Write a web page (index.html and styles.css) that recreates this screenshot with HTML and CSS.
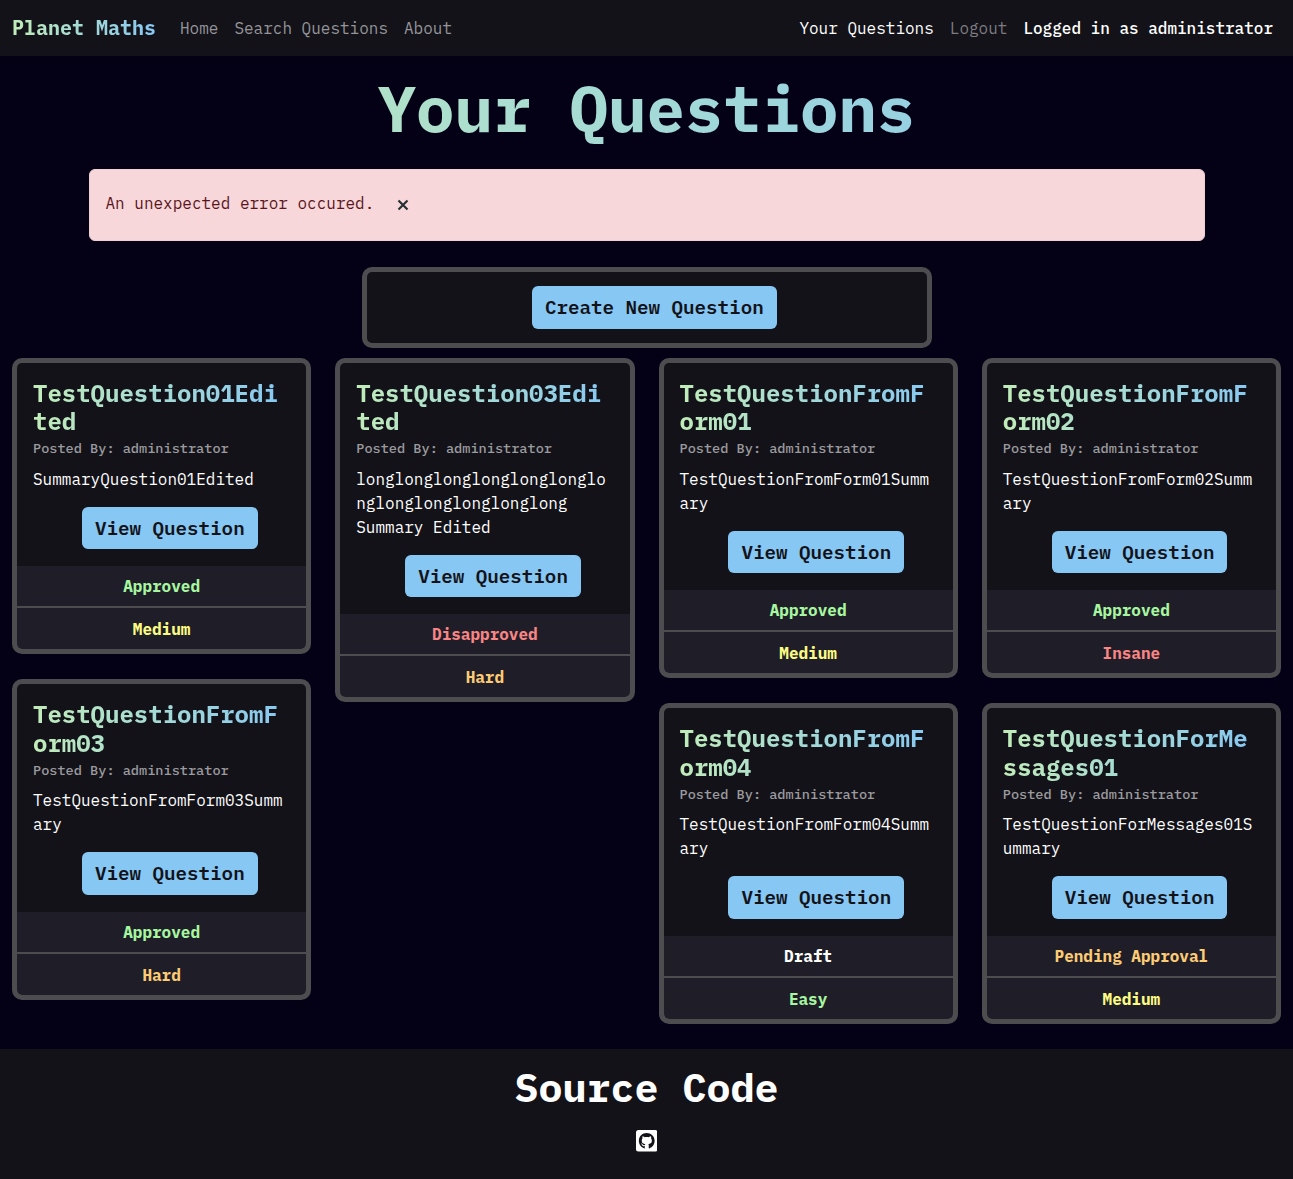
FILE: index.html
```html
<!DOCTYPE html>
<html lang="en">
<head>
<meta charset="utf-8">
<title>Planet Maths</title>
<link rel="stylesheet" href="styles.css">
</head>
<body>
<nav class="navbar">
  <a class="brand gradient">Planet Maths</a>
  <a class="nav-link">Home</a>
  <a class="nav-link">Search Questions</a>
  <a class="nav-link">About</a>
  <a class="nav-link active push">Your Questions</a>
  <a class="nav-link dim">Logout</a>
  <span class="nav-link user">Logged in as administrator</span>
</nav>
<main>
  <h1 class="gradient">Your Questions</h1>
  <div class="alert">
    <span>An unexpected error occured.</span>
    <svg class="close" viewBox="0 0 12 12"><path d="M1.5 1.5l9 9M10.5 1.5l-9 9"/></svg>
  </div>
  <div class="create"><a class="btn">Create New Question</a></div>
  <div class="columns">
    <div class="column">
      <article class="card">
        <div class="body">
          <h2 class="gradient">TestQuestion01Edited</h2>
          <div class="author">Posted By: administrator</div>
          <p>SummaryQuestion01Edited</p>
          <div class="action"><a class="btn">View Question</a></div>
        </div>
        <div class="status green">Approved</div>
        <div class="level yellow">Medium</div>
      </article>
      <article class="card">
        <div class="body">
          <h2 class="gradient">TestQuestionFromForm03</h2>
          <div class="author">Posted By: administrator</div>
          <p>TestQuestionFromForm03Summary</p>
          <div class="action"><a class="btn">View Question</a></div>
        </div>
        <div class="status green">Approved</div>
        <div class="level orange">Hard</div>
      </article>
    </div>
    <div class="column">
      <article class="card">
        <div class="body">
          <h2 class="gradient">TestQuestion03Edited</h2>
          <div class="author">Posted By: administrator</div>
          <p>longlonglonglonglonglonglonglonglonglonglonglong Summary Edited</p>
          <div class="action"><a class="btn">View Question</a></div>
        </div>
        <div class="status red">Disapproved</div>
        <div class="level orange">Hard</div>
      </article>
    </div>
    <div class="column">
      <article class="card">
        <div class="body">
          <h2 class="gradient">TestQuestionFromForm01</h2>
          <div class="author">Posted By: administrator</div>
          <p>TestQuestionFromForm01Summary</p>
          <div class="action"><a class="btn">View Question</a></div>
        </div>
        <div class="status green">Approved</div>
        <div class="level yellow">Medium</div>
      </article>
      <article class="card">
        <div class="body">
          <h2 class="gradient">TestQuestionFromForm04</h2>
          <div class="author">Posted By: administrator</div>
          <p>TestQuestionFromForm04Summary</p>
          <div class="action"><a class="btn">View Question</a></div>
        </div>
        <div class="status">Draft</div>
        <div class="level green">Easy</div>
      </article>
    </div>
    <div class="column">
      <article class="card">
        <div class="body">
          <h2 class="gradient">TestQuestionFromForm02</h2>
          <div class="author">Posted By: administrator</div>
          <p>TestQuestionFromForm02Summary</p>
          <div class="action"><a class="btn">View Question</a></div>
        </div>
        <div class="status green">Approved</div>
        <div class="level red">Insane</div>
      </article>
      <article class="card">
        <div class="body">
          <h2 class="gradient">TestQuestionForMessages01</h2>
          <div class="author">Posted By: administrator</div>
          <p>TestQuestionForMessages01Summary</p>
          <div class="action"><a class="btn">View Question</a></div>
        </div>
        <div class="status orange">Pending Approval</div>
        <div class="level yellow">Medium</div>
      </article>
    </div>
  </div>
</main>
<footer>
  <h3>Source Code</h3>
  <svg class="github" viewBox="0 32 448 448"><path d="M400 32H48C21.500 32 0 53.500 0 80v352c0 26.500 21.500 48 48 48h352c26.500 0 48-21.500 48-48V80c0-26.500-21.500-48-48-48zM277.300 415.700c-8.400 1.500-11.500-3.700-11.500-8 0-5.400.2-33 .2-55.300 0-15.600-5.200-25.500-11.300-30.700 37-4.100 76-9.200 76-73.100 0-18.200-6.500-27.300-17.100-39 1.700-4.300 7.400-22-1.700-45-13.900-4.300-45.700 17.900-45.700 17.900-13.200-3.700-27.500-5.600-41.600-5.600-14.100 0-28.400 1.900-41.600 5.600 0 0-31.800-22.200-45.700-17.900-9.100 22.900-3.500 40.600-1.700 45-10.600 11.700-15.600 20.800-15.600 39 0 63.600 37.300 69 74.300 73.100-4.800 4.300-9.100 11.700-10.600 22.300-9.500 4.300-33.800 11.700-48.300-13.900-9.100-15.800-25.500-17.100-25.500-17.100-16.200-.2-1.100 10.200-1.100 10.200 10.800 5 18.400 24.200 18.400 24.200 9.700 29.700 56.100 19.700 56.100 19.700 0 13.900.2 36.500.2 40.600 0 4.300-3 9.500-11.500 8-66-22.100-112.200-84.900-112.200-158.300 0-91.800 70.200-161.500 162-161.500S388 165.600 388 257.400c.1 73.400-44.700 136.300-110.700 158.300z"/></svg>
</footer>
</body>
</html>
```
FILE: styles.css
```css
* { box-sizing: border-box; }
body {
  margin: 0;
  min-height: 100vh;
  display: flex;
  flex-direction: column;
  background: #040016;
  color: #fff;
  font: 16px/24px "IBM Plex Mono", "Liberation Mono", monospace;
}
h1, h2, h3, p { margin: 0; }
.gradient {
  background: linear-gradient(to right, #c1ecb9, #86c7f3);
  -webkit-background-clip: text;
  background-clip: text;
  color: transparent;
}
.navbar {
  display: flex;
  align-items: center;
  height: 56px;
  padding: 0 12px;
  background: #131218;
}
.brand { margin-right: 16px; font-size: 20px; line-height: 30px; font-weight: 700; }
.nav-link { padding: 8px; color: #95959a; }
.nav-link.active { color: #fff; }
.nav-link.dim { color: #7c7c81; }
.nav-link.user { color: #fff; font-weight: 500; }
.push { margin-left: auto; }
main {
  flex: 1;
  display: flex;
  flex-direction: column;
  align-items: center;
}
h1 {
  width: 1269px;
  padding-top: 14px;
  height: 113px;
  text-align: center;
  font-size: 64px;
  line-height: 77px;
  font-weight: 700;
}
.alert {
  display: flex;
  align-items: center;
  gap: 23px;
  width: 1116px;
  height: 72px;
  margin-bottom: 26px;
  padding: 0 16px 4px;
  border: 1px solid #f1cfd5;
  border-radius: 6px;
  background: #f8d7da;
  color: #58151c;
}
.close { width: 12px; height: 12px; margin-top: 3px; fill: none; stroke: #263033; stroke-width: 2.2; }
.create {
  display: flex;
  justify-content: center;
  align-items: center;
  width: 570px;
  height: 81px;
  margin-bottom: 9.7px;
  padding-left: 15.6px;
  border: 5px solid #4d4c4e;
  border-radius: 10px;
  background: #131218;
}
.btn {
  display: block;
  padding: 7px 13px;
  border-radius: 6px;
  background: #86c7f3;
  color: #131218;
  font-size: 19.2px;
  line-height: 28.8px;
  font-weight: 600;
}
.columns {
  display: grid;
  grid-template-columns: repeat(4, 1fr);
  gap: 24px;
  width: 100%;
  padding: 0 12px 25px;
}
.column { display: flex; flex-direction: column; gap: 24.6px; min-width: 0; }
.card {
  overflow: hidden;
  border: 5px solid #4d4c4e;
  border-radius: 10px;
  background: #4d4c4e;
  text-align: center;
  font-weight: 700;
}
.body { padding: 16px 16px 16.8px; background: #131218; text-align: left; font-weight: 400; }
h2 { font-size: 24px; line-height: 28.8px; font-weight: 700; overflow-wrap: anywhere; }
.author {
  margin-bottom: 6.7px;
  color: #9b9b9f;
  font-size: 13.6px;
  font-weight: 500;
}
.card p { margin-bottom: 15.7px; overflow-wrap: anywhere; }
.action { display: flex; justify-content: center; padding-left: 16.4px; }
.status, .level { background: #1f1d27; }
.status { padding: 8px 0; margin-bottom: 2px; height: 40.2px; }
.level { padding: 9px 0 8px; border-radius: 0 0 5px 5px; }
.green { color: #a6f7a0; }
.yellow { color: #fbfb83; }
.orange { color: #fccb75; }
.red { color: #f98585; }
footer {
  display: flex;
  flex-direction: column;
  align-items: center;
  height: 130px;
  padding-top: 14px;
  background: #131218;
}
h3 { font-size: 40px; line-height: 48px; font-weight: 700; }
.github { width: 21.5px; height: 21.5px; margin-top: 19px; fill: #fff; }
```
